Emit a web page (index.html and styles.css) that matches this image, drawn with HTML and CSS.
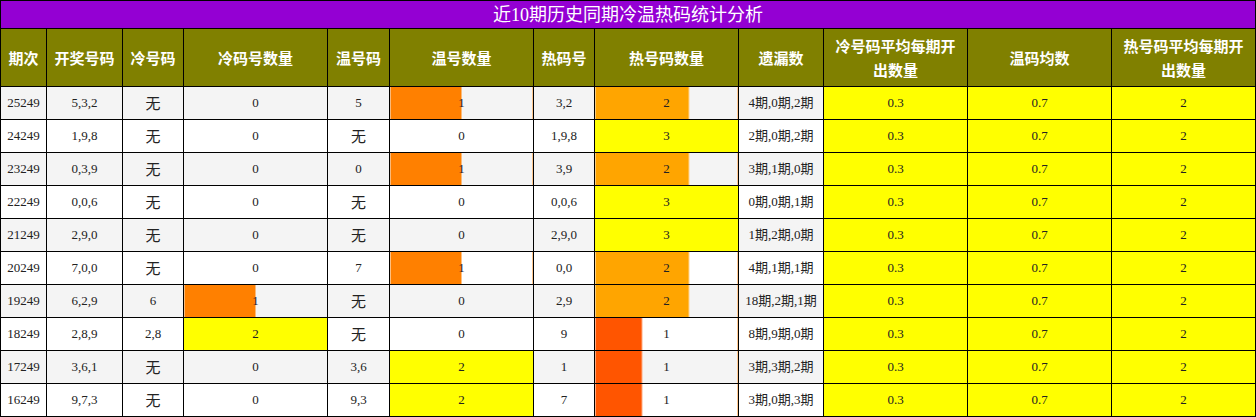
FILE: index.html
```html
<!DOCTYPE html>
<html lang="zh">
<head>
<meta charset="utf-8">
<title>近10期历史同期冷温热码统计分析</title>
<link rel="stylesheet" href="styles.css">
</head>
<body>
<table class="stats">
  <colgroup>
    <col class="c-46"><col class="c-76"><col class="c-61"><col class="c-144"><col class="c-62"><col class="c-144"><col class="c-61"><col class="c-144"><col class="c-85"><col class="c-144"><col class="c-144"><col class="c-144">
  </colgroup>
  <thead>
    <tr class="title-row"><th colspan="12" class="title">近10期历史同期冷温热码统计分析</th></tr>
    <tr class="head-row">
      <th>期次</th><th>开奖号码</th><th>冷号码</th><th>冷码号数量</th><th>温号码</th><th>温号数量</th><th>热码号</th><th>热号码数量</th><th>遗漏数</th><th class="long">冷号码平均每期开出数量</th><th>温码均数</th><th class="long">热号码平均每期开出数量</th>
    </tr>
  </thead>
  <tbody>
    <tr class="alt">
      <td>25249</td><td>5,3,2</td><td class="none">无</td><td>0</td><td>5</td>
      <td class="bar edge" style="--w:50%;--c:#ff8000;--e:#ffc080">1</td>
      <td>3,2</td>
      <td class="bar edge" style="--w:66%;--c:#ffa500;--e:#ffd490">2</td>
      <td>4期,0期,2期</td><td class="yl">0.3</td><td class="yl">0.7</td><td class="yl">2</td>
    </tr>
    <tr>
      <td>24249</td><td>1,9,8</td><td class="none">无</td><td>0</td><td class="none">无</td>
      <td>0</td>
      <td>1,9,8</td>
      <td class="yl">3</td>
      <td>2期,0期,2期</td><td class="yl">0.3</td><td class="yl">0.7</td><td class="yl">2</td>
    </tr>
    <tr class="alt">
      <td>23249</td><td>0,3,9</td><td class="none">无</td><td>0</td><td>0</td>
      <td class="bar edge" style="--w:50%;--c:#ff8000;--e:#ffc080">1</td>
      <td>3,9</td>
      <td class="bar edge" style="--w:66%;--c:#ffa500;--e:#ffd490">2</td>
      <td>3期,1期,0期</td><td class="yl">0.3</td><td class="yl">0.7</td><td class="yl">2</td>
    </tr>
    <tr>
      <td>22249</td><td>0,0,6</td><td class="none">无</td><td>0</td><td class="none">无</td>
      <td>0</td>
      <td>0,0,6</td>
      <td class="yl">3</td>
      <td>0期,0期,1期</td><td class="yl">0.3</td><td class="yl">0.7</td><td class="yl">2</td>
    </tr>
    <tr class="alt">
      <td>21249</td><td>2,9,0</td><td class="none">无</td><td>0</td><td class="none">无</td>
      <td>0</td>
      <td>2,9,0</td>
      <td class="yl">3</td>
      <td>1期,2期,0期</td><td class="yl">0.3</td><td class="yl">0.7</td><td class="yl">2</td>
    </tr>
    <tr>
      <td>20249</td><td>7,0,0</td><td class="none">无</td><td>0</td><td>7</td>
      <td class="bar edge" style="--w:50%;--c:#ff8000;--e:#ffc080">1</td>
      <td>0,0</td>
      <td class="bar edge" style="--w:66%;--c:#ffa500;--e:#ffd490">2</td>
      <td>4期,1期,1期</td><td class="yl">0.3</td><td class="yl">0.7</td><td class="yl">2</td>
    </tr>
    <tr class="alt">
      <td>19249</td><td>6,2,9</td><td>6</td>
      <td class="bar" style="--w:50%;--c:#ff8000;--e:#ffc080">1</td>
      <td class="none">无</td>
      <td>0</td>
      <td>2,9</td>
      <td class="bar edge" style="--w:66%;--c:#ffa500;--e:#ffd490">2</td>
      <td>18期,2期,1期</td><td class="yl">0.3</td><td class="yl">0.7</td><td class="yl">2</td>
    </tr>
    <tr>
      <td>18249</td><td>2,8,9</td><td>2,8</td>
      <td class="yl">2</td>
      <td class="none">无</td>
      <td>0</td>
      <td>9</td>
      <td class="bar edge" style="--w:33%;--c:#ff5500;--e:#ffaa80">1</td>
      <td>8期,9期,0期</td><td class="yl">0.3</td><td class="yl">0.7</td><td class="yl">2</td>
    </tr>
    <tr class="alt">
      <td>17249</td><td>3,6,1</td><td class="none">无</td><td>0</td><td>3,6</td>
      <td class="yl">2</td>
      <td>1</td>
      <td class="bar edge" style="--w:33%;--c:#ff5500;--e:#ffaa80">1</td>
      <td>3期,3期,2期</td><td class="yl">0.3</td><td class="yl">0.7</td><td class="yl">2</td>
    </tr>
    <tr>
      <td>16249</td><td>9,7,3</td><td class="none">无</td><td>0</td><td>9,3</td>
      <td class="yl">2</td>
      <td>7</td>
      <td class="bar edge" style="--w:33%;--c:#ff5500;--e:#ffaa80">1</td>
      <td>3期,0期,3期</td><td class="yl">0.3</td><td class="yl">0.7</td><td class="yl">2</td>
    </tr>
  </tbody>
</table>
</body>
</html>
```
FILE: styles.css
```css
html, body {
  margin: 0;
  padding: 0;
  background: #ffffff;
}

.stats {
  width: 1256px;
  border-collapse: collapse;
  table-layout: fixed;
  font-family: "Liberation Serif", "Noto Sans CJK SC", serif;
  font-size: 13px;
  color: #222222;
}

.c-46 { width: 46px; }
.c-76 { width: 76px; }
.c-61 { width: 61px; }
.c-62 { width: 62px; }
.c-85 { width: 85px; }
.c-144 { width: 144px; }

.stats th,
.stats td {
  border: 1px solid #000000;
  padding: 0;
  text-align: center;
  vertical-align: middle;
}

.title-row { height: 28px; }

.title {
  background: #9400d3;
  color: #ffffff;
  font-weight: normal;
  font-size: 18px;
  line-height: 24px;
}

.head-row { height: 58px; }

.head-row th {
  background: #808000;
  color: #ffffff;
  font-family: "Noto Sans CJK SC", sans-serif;
  font-weight: bold;
  font-size: 15px;
  line-height: 24px;
  padding: 0 2px;
}

.head-row th.long {
  padding: 0 8px;
}

.stats tbody tr { height: 33px; }

.stats tbody td {
  background-color: #ffffff;
  line-height: 16px;
}

.stats tbody tr.alt td {
  background-color: #f4f4f4;
}

.stats tbody td.none {
  font-family: "Noto Sans CJK SC", sans-serif;
  font-size: 15px;
}

.stats tbody td.yl,
.stats tbody tr.alt td.yl {
  background-color: #ffff00;
}

.stats tbody td.bar {
  background-image: linear-gradient(to right,
    var(--c) 0,
    var(--c) calc(var(--w) - 1px),
    var(--e) calc(var(--w) - 1px),
    var(--e) var(--w),
    transparent var(--w));
}

.stats tbody td.edge {
  box-shadow: inset -1px 0 0 #ffc890;
}
```
